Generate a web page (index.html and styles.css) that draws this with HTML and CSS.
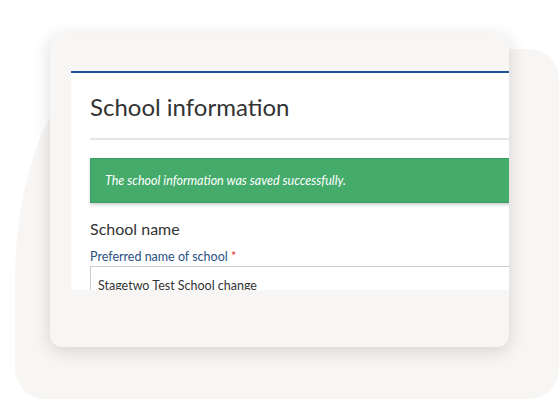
FILE: index.html
```html
<!DOCTYPE html>
<html>
  <head>
    <title>School information</title>
    <link rel="stylesheet" href="styles.css">
  </head>
  <body>
    <div class="backdrop">
      <div class="card">
        <div class="shot">
          <h2>School information</h2>
          <hr />
          <div class="alert">The school information was saved successfully.</div>
          <h3>School name</h3>
          <label for="schoolName">Preferred name of school <span class="req">*</span></label>
          <input type="text" id="schoolName" value="Stagetwo Test School change" />
        </div>
      </div>
    </div>
  </body>
</html>
```

FILE: styles.css
```css
body {
  margin: 0;
  width: 560px;
  height: 401px;
  background: #ffffff;
  font-family: Lato, 'Open Sans', sans-serif;
  overflow: hidden;
}

.backdrop {
  position: relative;
  margin: 49px 1px 0 15px;
  height: 350px;
  background: #f7f6f4;
  border-radius: 120px 30px 30px 30px / 230px 30px 30px 30px;
}

/* card overlaps the backdrop, sitting above and to the left of it */
.card {
  position: absolute;
  top: -16px;
  left: 35px;
  width: 459px;
  height: 314px;
  background: #f7f6f4;
  border-radius: 12px;
  box-shadow: 0 4px 18px rgba(0, 0, 0, 0.14);
  overflow: hidden;
  padding: 38px 0 0 21px;
  box-sizing: border-box;
}

/* the page capture runs past the card's right edge */
.shot {
  width: 520px;
  height: 219px;
  background: #ffffff;
  border-top: 2px solid #1a5597;
  padding: 0 0 0 19px;
  box-sizing: border-box;
  overflow: hidden;
  color: #333333;
}

h2 {
  margin: 0;
  padding: 19px 0 0;
  font-size: 24px;
  font-weight: 400;
  line-height: 30px;
  color: #333;
}

hr {
  margin: 16px 0 0;
  border: none;
  border-top: 2px solid #e6e6e6;
}

.alert {
  margin-top: 18px;
  height: 43px;
  display: flex;
  align-items: center;
  padding-left: 14px;
  background: #44ab6b;
  border: 1px solid #3f9e63;
  box-shadow: 0 2px 3px rgba(0, 0, 0, 0.18);
  color: #ffffff;
  font-style: italic;
  font-size: 12.5px;
}

h3 {
  margin: 16px 0 0;
  font-size: 16px;
  font-weight: 400;
  line-height: 20px;
  color: #333;
}

label {
  display: block;
  margin-top: 10px;
  font-size: 12.5px;
  line-height: 16px;
  color: #2a5183;
}

.req {
  color: #e0342f;
}

input[type='text'] {
  display: block;
  margin-top: 1px;
  width: 100%;
  box-sizing: border-box;
  height: 34px;
  padding: 4px 7px 0;
  border: 1px solid #cccccc;
  font-family: Lato, 'Open Sans', sans-serif;
  font-size: 12.5px;
  color: #333;
}
```
